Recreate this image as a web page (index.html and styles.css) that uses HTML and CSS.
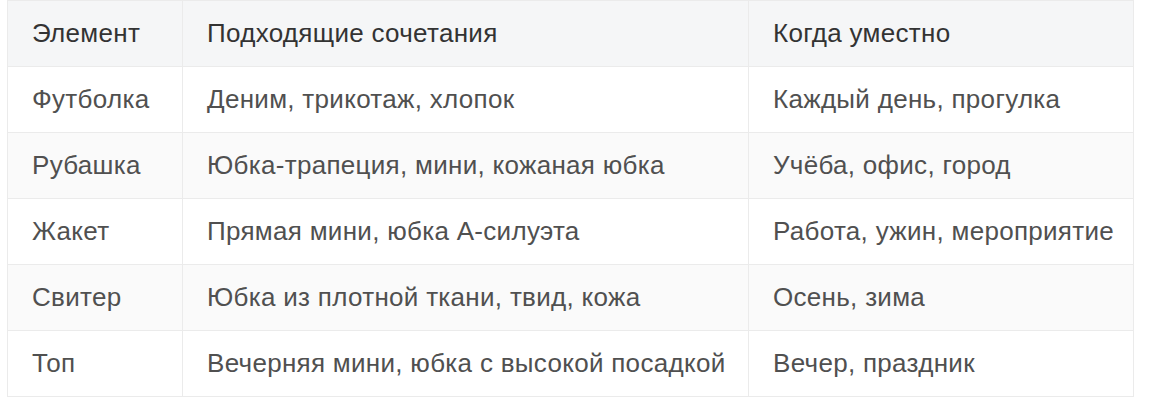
FILE: index.html
```html
<!DOCTYPE html>
<html lang="ru">
<head>
<meta charset="utf-8">
<title>Сочетания</title>
<link rel="stylesheet" href="styles.css">
</head>
<body>
<table class="combo-table">
  <colgroup>
    <col class="col-element">
    <col class="col-match">
    <col class="col-when">
  </colgroup>
  <thead>
    <tr>
      <th>Элемент</th>
      <th>Подходящие сочетания</th>
      <th>Когда уместно</th>
    </tr>
  </thead>
  <tbody>
    <tr>
      <td>Футболка</td>
      <td>Деним, трикотаж, хлопок</td>
      <td>Каждый день, прогулка</td>
    </tr>
    <tr>
      <td>Рубашка</td>
      <td>Юбка-трапеция, мини, кожаная юбка</td>
      <td>Учёба, офис, город</td>
    </tr>
    <tr>
      <td>Жакет</td>
      <td>Прямая мини, юбка А-силуэта</td>
      <td>Работа, ужин, мероприятие</td>
    </tr>
    <tr>
      <td>Свитер</td>
      <td>Юбка из плотной ткани, твид, кожа</td>
      <td>Осень, зима</td>
    </tr>
    <tr>
      <td>Топ</td>
      <td>Вечерняя мини, юбка с высокой посадкой</td>
      <td>Вечер, праздник</td>
    </tr>
  </tbody>
</table>
</body>
</html>
```

FILE: styles.css
```css
html, body {
  margin: 0;
  padding: 0;
  background: #ffffff;
}

body {
  padding: 0 7px;
  font-family: "Liberation Sans", Arial, sans-serif;
}

.combo-table {
  width: 1126px;
  border-collapse: collapse;
  table-layout: fixed;
  font-size: 26px;
  letter-spacing: 0.3px;
  color: #505050;
}

.col-element { width: 175px; }
.col-match { width: 566px; }
.col-when { width: 385px; }

.combo-table th,
.combo-table td {
  border: 1px solid #ebebeb;
  padding: 18px 24px 18px 24px;
  line-height: 29px;
  height: 29px;
  text-align: left;
  white-space: nowrap;
}

.combo-table th {
  background: #f5f6f7;
  font-weight: normal;
  color: #333333;
}

.combo-table tbody tr:nth-child(even) td {
  background: #fafafa;
}
```
